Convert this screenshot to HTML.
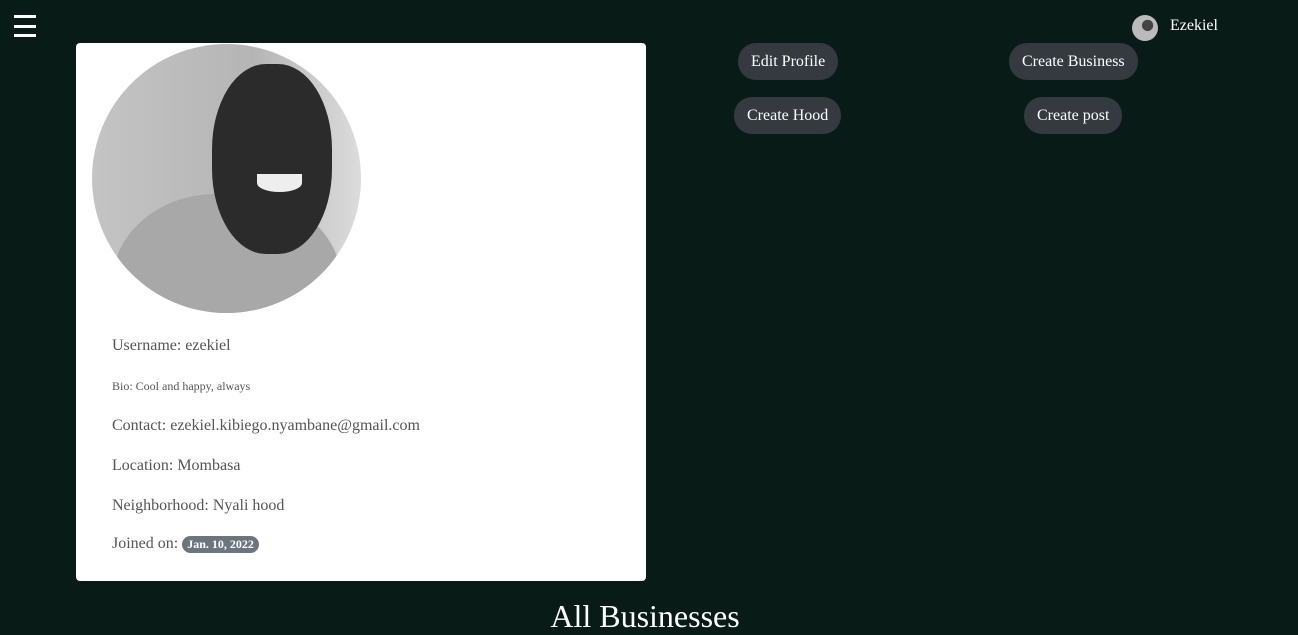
<!DOCTYPE html>
<html><head><style>
body{margin:0;width:1298px;height:631px;overflow:hidden;background:#081b16;font-family:"Liberation Serif",serif;position:relative}
.a{position:absolute}
.ham div{position:absolute;left:14px;width:22px;height:3px;background:#fff}
.card{left:76px;top:43px;width:570px;height:538px;background:#fff;border-radius:4px}
.photo{left:92px;top:44px;width:269px;height:269px;border-radius:50%;overflow:hidden;background:linear-gradient(90deg,#c4c4c4,#b5b5b5 60%,#dcdcdc)}
.t{color:#555;font-size:16px}
.btn{background:#343a40;color:#fff;font-size:16px;border-radius:18px;height:37px;line-height:37px;padding:0 13px}
.badge{display:inline-block;background:#6c757d;color:#fff;font-size:12px;font-weight:bold;border-radius:9px;padding:1px 5px;line-height:15px}
</style></head><body>
<div class="ham"><div style="top:15px"></div><div style="top:25px"></div><div style="top:34px"></div></div>
<div class="a" style="left:1132px;top:15px;width:26px;height:26px;border-radius:50%;background:radial-gradient(circle at 60% 40%,#444 0 25%,#bbb 26%)"></div>
<div class="a" style="left:1170px;top:17px;color:#fff;font-size:16px">Ezekiel</div>
<div class="a card"></div>
<div class="a photo">
<div class="a" style="left:20px;top:150px;width:230px;height:200px;border-radius:45% 45% 0 0;background:#a8a8a8"></div>
<div class="a" style="left:120px;top:20px;width:120px;height:190px;border-radius:45%;background:#2b2b2b"></div>
<div class="a" style="left:165px;top:130px;width:45px;height:18px;border-radius:0 0 50% 50%;background:#eee"></div>
</div>
<div class="a t" style="left:112px;top:337px">Username: ezekiel</div>
<div class="a t" style="left:112px;top:379px;font-size:12px">Bio: Cool and happy, always</div>
<div class="a t" style="left:112px;top:417px">Contact: ezekiel.kibiego.nyambane@gmail.com</div>
<div class="a t" style="left:112px;top:457px">Location: Mombasa</div>
<div class="a t" style="left:112px;top:497px">Neighborhood: Nyali hood</div>
<div class="a t" style="left:112px;top:535px">Joined on: <span class="badge">Jan. 10, 2022</span></div>
<div class="a btn" style="left:738px;top:43px">Edit Profile</div>
<div class="a btn" style="left:1009px;top:43px">Create Business</div>
<div class="a btn" style="left:734px;top:97px">Create Hood</div>
<div class="a btn" style="left:1024px;top:97px">Create post</div>
<div class="a" style="left:0;width:1290px;text-align:center;top:598px;color:#fff;font-size:32px">All Businesses</div>
</body></html>
